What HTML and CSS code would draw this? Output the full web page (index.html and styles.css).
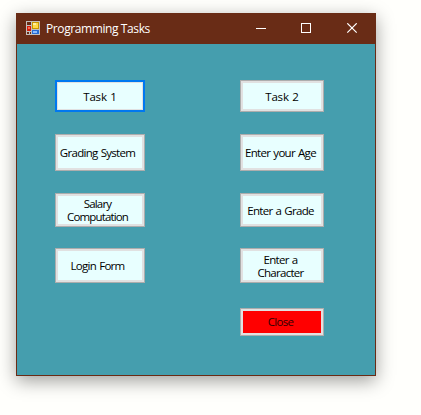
FILE: index.html
```
<!DOCTYPE html>
<html lang="en">
<head>
<meta charset="utf-8">
<title>Programming Tasks</title>
<link rel="stylesheet" href="styles.css">
</head>
<body>
<main class="window">
  <header class="titlebar">
    <svg class="app-icon" width="14" height="14" viewBox="0 0 14 14" shape-rendering="crispEdges">
      <path fill="#c4c0be" d="M0 0h14v14H0z"/>
      <path fill="#692c16" d="M1 1h4v3H1zM1 11h2v2H1zM4 11h1v2H4z"/>
      <path fill="#c99700" d="M6 1h7v7H6z"/><path fill="#ffda4a" d="M7 2h5v5H7z"/><path fill="#fff0a0" d="M7 2h3v2H7z"/>
      <path fill="#d51c0b" d="M1 5h4v5H1z"/><path fill="#ff6b50" d="M2 6h2v2H2z"/>
      <path fill="#286bd2" d="M6 9h7v4H6z"/><path fill="#8bbcff" d="M7 10h4v2H7z"/>
    </svg>
    <h1 class="title">Programming Tasks</h1>
    <svg class="controls" width="104" height="12" viewBox="0 0 104 12" fill="none" stroke="#fff">
      <path shape-rendering="crispEdges" d="M0 5.500h10M45.500 .5h9v9h-9z"/>
      <path stroke-width="1.200" d="M91.300 .3l9.400 9.400M100.700 .3l-9.400 9.400"/>
    </svg>
  </header>
  <div class="form">
    <div class="column left">
      <button class="btn task focused"><span class="wide">Task 1</span></button>
      <button class="btn second"><span class="shift">Grading System</span></button>
      <button class="btn third"><span class="shift tight">Salary<br>Computation</span></button>
      <button class="btn fourth"><span class="shift">Login Form</span></button>
    </div>
    <div class="column right">
      <button class="btn task"><span class="wide">Task 2</span></button>
      <button class="btn second"><span class="nudge">Enter your Age</span></button>
      <button class="btn third"><span class="nudge">Enter a Grade</span></button>
      <button class="btn fourth"><span class="nudge">Enter a<br>Character</span></button>
      <button class="btn close"><span class="nudge">Close</span></button>
    </div>
  </div>
</main>
</body>
</html>
```
FILE: styles.css
```
* { box-sizing: border-box; }
body { margin: 0; height: 415px; padding: 13px 0 0 16px; background: #fffffc; overflow: hidden; }
.window {
  width: 360px; height: 363px; background: #459eae;
  border: solid #692c16; border-width: 0 1px 1px;
  box-shadow: 0 5px 17px rgba(0, 0, 0, .38);
}
.titlebar { display: flex; height: 31px; padding: 8px 15px 0 9px; background: #692c16; }
.app-icon { flex: none; }
.title {
  margin: 0 auto 0 6px; color: #fff; white-space: nowrap;
  font: 400 12px/16px "Open Sans", sans-serif; letter-spacing: -.4px;
}
.controls { flex: none; margin-top: 2px; }
.form { display: flex; gap: 95px; padding: 36px 0 0 38px; }
.column { display: flex; flex-direction: column; }
.left { width: 90px; }
.right { width: 84px; }
.btn {
  display: flex; align-items: center; justify-content: center;
  margin: 0; padding: 0; border: 1px solid #adadad; border-radius: 0;
  background: #e8ffff; box-shadow: inset 0 0 0 2px #e1e1e1;
  color: #000; font: 11.500px/13px "Open Sans", sans-serif; letter-spacing: -.7px; word-spacing: .8px;
  text-align: center; white-space: nowrap;
}
.focused { border: 2px solid #0078f0; box-shadow: inset 0 0 0 1px #e1e1e1; }
.shift { margin-right: 5px; }
.tight { letter-spacing: -.85px; }
.nudge { margin-right: 3px; }
.wide { letter-spacing: -.2px; }
.task { height: 32px; }
.second { height: 37px; margin-top: 22px; }
.third { height: 34px; margin-top: 22px; }
.fourth { height: 35px; margin-top: 21px; }
.close { height: 28px; margin-top: 25px; padding-bottom: 2px; background: #f00; color: #300; }
```
